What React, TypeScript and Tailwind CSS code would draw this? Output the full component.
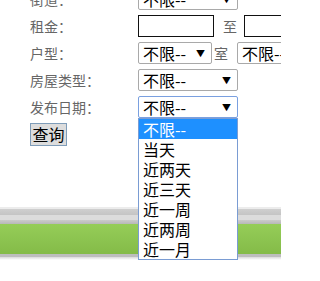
import React from "react";

const font = { fontFamily: '"Noto Sans CJK SC", "Liberation Sans", sans-serif' };

const Select = ({ w, focused }: { w: string; focused?: boolean }) => (
  <div
    className={`${w} shrink-0 h-[22px] flex items-center justify-between pl-[4px] pr-[6px] bg-white rounded-[2px] border whitespace-nowrap ${
      focused ? "border-[#7aa0e0]" : "border-[#a9a9a9]"
    } text-[16px] leading-none text-black`}
  >
    <span>不限--</span>
    <span className="text-[9px]">▼</span>
  </div>
);

const Row = ({ label, children }: { label: string; children: React.ReactNode }) => (
  <div className="flex items-center h-[22px] w-max">
    <div className="w-[108px] shrink-0 whitespace-nowrap text-[14px] text-[#666]">{label}</div>
    {children}
  </div>
);

const options = ["不限--", "当天", "近两天", "近三天", "近一周", "近两周", "近一月"];

export default function App() {
  return (
    <div className="w-[281px] h-[281px] overflow-hidden bg-white" style={font}>
      <div className="-mt-[12px] pl-[30px] flex flex-col gap-[5px]">
        <Row label="街道：">
          <Select w="w-[100px]" />
        </Row>
        <Row label="租金：">
          <div className="w-[76px] h-[22px] shrink-0 border border-[#111]" />
          <span className="ml-[9px] mr-[7px] shrink-0 text-[14px] text-[#666]">至</span>
          <div className="w-[76px] h-[22px] border border-[#111] shrink-0" />
        </Row>
        <Row label="户型：">
          <Select w="w-[74px]" />
          <span className="ml-[2px] mr-[9px] shrink-0 text-[14px] text-[#666]">室</span>
          <Select w="w-[100px]" />
        </Row>
        <Row label="房屋类型：">
          <Select w="w-[100px]" />
        </Row>
        <div className="relative">
          <Row label="发布日期：">
            <Select w="w-[100px]" focused />
          </Row>
          <div className="absolute z-10 left-[108px] top-[22px] w-[100px] bg-white border border-[#7a9cd3] text-[16px] text-black">
            {options.map((o, i) => (
              <div
                key={o}
                className={`h-[20px] leading-[20px] pl-[4px] overflow-hidden ${i === 0 ? "bg-[#1e90ff] text-white" : ""}`}
              >
                {o}
              </div>
            ))}
          </div>
        </div>
        <div className="-mt-[1px]">
          <button className="w-[37px] h-[23px] bg-[#dddddd] border border-[#7f9db9] text-[16px] leading-none text-black">
            查询
          </button>
        </div>
      </div>
      <div className="mt-[61px]">
        <div className="h-[2px] bg-[#ececec]" />
        <div className="h-[6px] bg-gradient-to-b from-[#cfcfcf] to-[#c4c4c4]" />
        <div className="h-[5px] bg-[#dcdcdc]" />
        <div className="h-[4px] bg-gradient-to-b from-[#cbcbcb] to-[#b8b8b8]" />
        <div className="h-[30px] bg-gradient-to-b from-[#95cd58] to-[#84bb48]" />
        <div className="h-[3px] bg-[#bdbdbd]" />
        <div className="h-[3px] bg-gradient-to-b from-[#dadada] to-white" />
      </div>
    </div>
  );
}
